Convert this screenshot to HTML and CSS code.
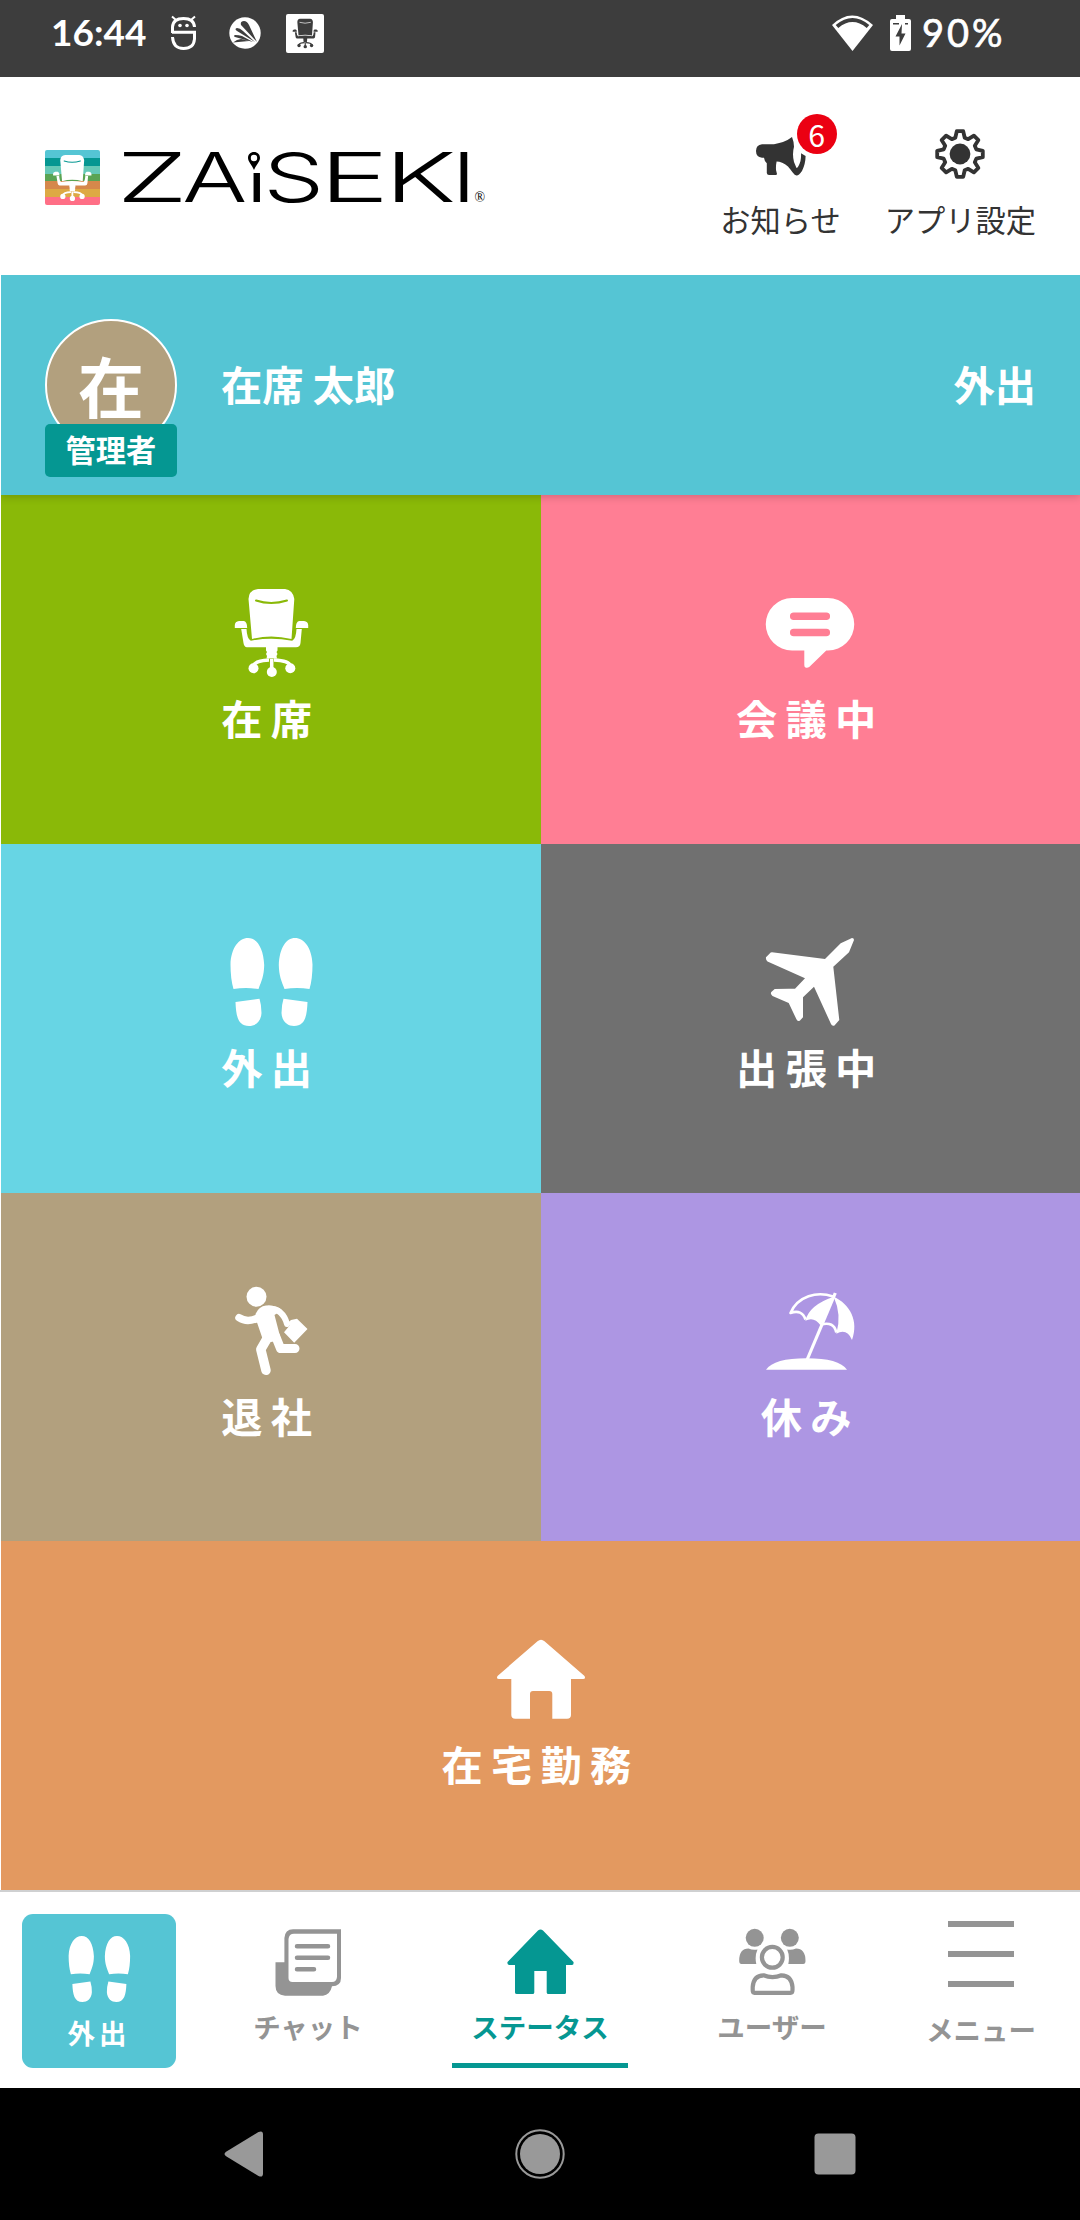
FILE: index.html
```html
<!DOCTYPE html>
<html lang="ja">
<head>
<meta charset="utf-8">
<title>ZAiSEKI</title>
<link rel="stylesheet" href="styles.css">
</head>
<body>
<svg class="defs" aria-hidden="true">
  <symbol id="chair" viewBox="0 0 88 88">
    <path fill="currentColor" d="M31 0H58Q66 1 67.300 10L64.500 50Q44 45 25 50L21.500 10Q22 1 31 0Z"/>
    <path fill="none" stroke="var(--cut)" stroke-width="2" stroke-linecap="round" d="M29 11.500Q44 16.500 60 11.500"/>
    <path fill="currentColor" d="M12 32H17Q20.200 33 20.200 39H7.800V36Q8 32.500 12 32ZM77 32H72Q68.800 33 68.800 39H81.200V36Q81 32.500 77 32ZM14.200 40H19.500Q20 50 23.800 51.700Q44 48 65.200 51.700Q69 50 69.500 40H74.800L73.500 54Q73 58.300 69 58.300H50.500V61.500L49.500 63L50.500 65L49.500 67L50 69.500H39.500L40 67L39 65L40 63L39 61.500V58.300H20Q17 58 16.500 54Z"/>
    <path fill="none" stroke="currentColor" stroke-width="3.500" d="M42 71Q28 71.500 26.500 77M47 71Q62 71.500 63.500 77M44.700 70V82"/>
    <g fill="currentColor"><circle cx="26.500" cy="79.300" r="5"/><circle cx="44.800" cy="83" r="5"/><circle cx="63.300" cy="79.300" r="5"/></g>
  </symbol>
  <symbol id="feet" viewBox="0 0 88 88">
    <g fill="currentColor">
      <path id="foot" d="M6.500 51Q3.500 41 3.500 26.500C4 10 12 0 21 0S36.500 10 37.200 27C37 38 34.500 43 31.500 51Q19 49 6.500 51ZM8.500 64L32.500 60.700Q34.500 67 34.500 75C34 84 28 88 22 88C11 88 9 78 8.500 64Z"/>
      <use href="#foot" transform="translate(89 0) scale(-1 1)"/>
    </g>
  </symbol>
</svg>

<header class="status">
  <div class="status-side">
    <span class="clock">16:44</span>
    <svg class="face" viewBox="0 0 25 36" fill="none" stroke="#fff" stroke-width="3">
      <path d="M1.500 18V12C2 6 6 3.500 12.500 3.500S23 6 23.500 12M1 17.300H23.500V24C23 30 19 33.500 12.500 33.500S2 30 1.500 22"/>
      <path stroke-width="2" d="M1 1.500L5 5M24 1.500L20 5"/>
      <g fill="#fff" stroke="none"><circle cx="9" cy="10.500" r="1.800"/><circle cx="16" cy="10.500" r="1.800"/></g>
    </svg>
    <svg class="fan" viewBox="0 0 32 32">
      <circle cx="16" cy="16" r="15.700" fill="#fff"/>
      <path fill="#3d3d3d" d="M28 25L12 8Q11 4 15 4Q18 4 20 8ZM26 25L8 14Q5 12 8 11Q11 11 14 14ZM24 25L6 20Q4 19 6 18Q10 18 13 19ZM20 24L4 25.500Q8 22 12 22Z"/>
    </svg>
    <span class="app-chip"><svg viewBox="0 0 88 88"><use href="#chair"/></svg></span>
  </div>
  <div class="status-side">
    <svg class="wifi" viewBox="0 0 41 36"><path fill="#fff" d="M20.500 36L0 10Q20-9 41 10Z"/><path fill="none" stroke="#3d3d3d" stroke-width="4" d="M5 11.500Q20.500-1.500 36 11.500"/></svg>
    <svg class="battery" viewBox="0 0 21 36"><path fill="#fff" d="M6 0H15V4H19Q21 4 21 6V34Q21 36 19 36H2Q0 36 0 34V6Q0 4 2 4H6Z"/><path fill="#3d3d3d" d="M12 9L5.500 21.500H9.500V30.500L15.500 18.500H11.500ZM3 8H9V9.500H3ZM15 8H18V9.500H15Z"/></svg>
    <span class="percent">90%</span>
  </div>
</header>

<div class="topbar">
  <div class="brand">
    <span class="brand-mark"><svg viewBox="0 0 88 88"><use href="#chair"/></svg></span>
    <svg class="wordmark" viewBox="0 0 366 60">
      <text class="wordmark-text" transform="scale(1.4 1)" y="54"><tspan x="-4.600" textLength="51" lengthAdjust="spacingAndGlyphs">Z</tspan><tspan x="42.300">A</tspan><tspan x="87.500">i</tspan><tspan x="100.200">S</tspan><tspan x="140.100" textLength="50" lengthAdjust="spacingAndGlyphs">E</tspan><tspan x="186.900" textLength="51" lengthAdjust="spacingAndGlyphs">K</tspan><tspan x="234.500">I</tspan></text>
      <path fill="#fff" d="M122 0H140V25H122Z"/>
      <path fill-rule="evenodd" d="M131 4C127.500 4 125 6.500 125 10C125 13.500 129 17 131 22C133 17 137 13.500 137 10C137 6.500 134.500 4 131 4ZM131 6.800A3.200 3.200 0 0 1 131 13.200A3.200 3.200 0 0 1 131 6.800Z"/>
      <text class="reg" x="351.500" y="53.500">®</text>
    </svg>
  </div>
  <div class="actions">
    <div class="action">
      <span class="action-icon">
        <svg class="horn" viewBox="0 0 50 39"><path fill="#333" d="M6 7.300L18 7.200Q29 5.500 36 0Q38 5 38 9.700Q36 17 38 25L40.500 31Q42.500 30.500 44.500 24Q45.300 20 45 16.300L49.600 19Q49.500 27 46 34Q42 39.500 40 38.300C38 38 36 34 32 29.500Q26 24.500 20.600 24.500Q19.800 28 20 33L21 37Q21 38 19.500 38H13Q11 38 10.800 36V26.300Q8.500 24.500 8 20.700H6Q0 20 0 14Q0 8 6 7.300Z"/></svg>
        <span class="count">6</span>
      </span>
      <span class="action-label">お知らせ</span>
    </div>
    <div class="action">
      <span class="action-icon">
        <svg class="gear" viewBox="-25 -25 50 50"><circle r="10.400" fill="#333"/><path fill="none" stroke="#333" stroke-width="3.800" stroke-linejoin="round" d="M-4.700-16.300L-3.200-22.800H3.200L4.700-16.300L8.200-14.800L13.900-18.400L18.400-13.900L14.800-8.200L16.300-4.700L22.800-3.200V3.200L16.300 4.700L14.800 8.200L18.400 13.900L13.900 18.400L8.200 14.800L4.700 16.300L3.200 22.800H-3.200L-4.700 16.300L-8.200 14.800L-13.900 18.400L-18.400 13.900L-14.800 8.200L-16.300 4.700L-22.800 3.200V-3.200L-16.300-4.700L-14.800-8.200L-18.400-13.900L-13.900-18.400L-8.200-14.800Z"/></svg>
      </span>
      <span class="action-label">アプリ設定</span>
    </div>
  </div>
</div>

<section class="user">
  <div class="avatar"><span class="avatar-face">在</span><span class="role">管理者</span></div>
  <span class="user-name">在席 太郎</span>
  <span class="user-state">外出</span>
</section>

<main class="tiles">
  <div class="tile green"><svg viewBox="0 0 88 88"><use href="#chair"/></svg><span>在席</span></div>
  <div class="tile pink">
    <svg viewBox="0 0 88 88"><path fill="#fff" d="M26 9H62A26.200 26.200 0 0 1 62 61.500H60.300L43.500 77.700Q41.300 79.500 39.500 78.500Q38.300 78 38.300 76V61.500H26A26.200 26.200 0 0 1 26 9Z"/><path stroke="#ff7e94" stroke-width="7.500" stroke-linecap="round" d="M27.700 27.300H60.300M27.700 43.400H60.300"/></svg>
    <span>会議中</span>
  </div>
  <div class="tile sky"><svg viewBox="0 0 88 88"><use href="#feet"/></svg><span>外出</span></div>
  <div class="tile gray">
    <svg viewBox="0 0 88 88"><path fill="#fff" d="M59 21L74.700 5.300L86 0Q88 0 88 2L83 14.300L67.300 28.700L73.300 82L68.500 87.500Q66 88.500 65 86L48 48.700L37 59.300V79.300L34 82.500Q31.500 84 30.300 81L22.700 65L6.500 58Q4 56 5.300 54L8.700 51Q18 50.500 29 50.700L39 40.300L1.500 23.500Q-.5 22 0 19.300L4.700 14.600L6 14.300Z"/></svg>
    <span>出張中</span>
  </div>
  <div class="tile tan">
    <svg viewBox="0 0 88 88" fill="none" stroke="#fff" stroke-linecap="round" stroke-linejoin="round">
      <circle cx="29.500" cy="9.700" r="10" fill="#fff" stroke="none"/>
      <path fill="#fff" stroke="none" d="M28.500 27Q32 19 39 18.500Q50 18 55 23L47.500 28L54 53L44 55L36 53L29.500 34Z"/>
      <path stroke-width="7.500" d="M12 30.700Q20 36 31 31"/>
      <path stroke-width="6" d="M42 21.500Q56 22 60 37"/>
      <path stroke-width="9.500" d="M41 50L33.800 62.300L39 83.300"/>
      <path stroke-width="9" d="M48.500 49L53.500 61.500H68"/>
      <path fill="#fff" stroke="none" d="M60.500 36L64 33L70 31.700L80.500 42L67.200 55.700L57 45.300L63 38Z"/>
    </svg>
    <span>退社</span>
  </div>
  <div class="tile purple">
    <svg viewBox="0 0 88 88">
      <path fill="#fff" d="M0 82.700Q8 71.300 40.500 71.300T81 82.700Z"/>
      <path stroke="#fff" stroke-width="3.200" d="M69.300 6L41 73"/>
      <path fill="#fff" d="M67.700 9.700Q43 18 39.300 33.800Q48 29 54.500 38.300ZM67.700 9.700C84 17 93 34 86 53Q81 41 70.300 46.700Q76 28 67.700 9.700Z"/>
      <path fill="none" stroke="#fff" stroke-width="2.600" stroke-linejoin="round" d="M67 9.500C51 4 32 9 24.500 26Q36 22 39.500 32.500M55 37.500Q68 34 70.300 45.500"/>
    </svg>
    <span>休み</span>
  </div>
  <div class="tile orange">
    <svg viewBox="0 0 88 88"><path fill="#fff" d="M40.500 6.200Q44 3.200 47.500 6.200L87.500 41Q89 44 86 44H74V80Q74 83.700 70 83.700H55.300V59Q55.300 56 52.300 56H36Q33 56 33 59V83.700H18.300Q14.300 83.700 14.300 80V44H2Q-1 44 .5 41Z"/></svg>
    <span>在宅勤務</span>
  </div>
</main>

<nav class="tabs">
  <div class="tab current"><svg viewBox="0 0 88 88"><use href="#feet"/></svg><span>外出</span></div>
  <div class="tab">
    <svg viewBox="0 0 67 67"><path fill="#949494" d="M.5 33.300H9.400V9Q10 .4 18 .3H66V49Q66 57 57 57.300Q55 66 48 66.700H10Q.5 66 .5 57Z"/><path fill="#fff" d="M19 4.700H62V48Q61.500 53 57 53H17.500Q13.500 53 13.500 49V10Q14 4.700 19 4.700Z"/><path stroke="#949494" stroke-width="4.500" stroke-linecap="round" d="M22 17.300H53M22 28.700H53M22 40.300H39"/></svg>
    <span>チャット</span>
  </div>
  <div class="tab active">
    <svg viewBox="0 0 67 67"><path fill="#059792" d="M31 1.500Q33.500-.5 36 1.500L66.500 33Q67 36 65 36H59V63.500Q59 65 57.500 65H41.500Q39.700 65 39.700 63.500V42H27.300V63.500Q27.300 65 25.500 65H10Q8 65 8 63.500V36H2Q0 35.500 .5 33Z"/></svg>
    <span>ステータス</span>
  </div>
  <div class="tab">
    <svg viewBox="0 0 67 67"><g fill="#949494"><circle cx="15.700" cy="8.800" r="9"/><circle cx="50.800" cy="8.800" r="9"/><path d="M2.500 35Q.2 35 .2 32Q0 19.500 9.500 19.500Q14 21.500 18.500 20.500Q15.500 27 17.300 35ZM64.200 35Q66.500 35 66.500 32Q66.500 19.500 57 19.500Q52.500 21.500 48.200 20.500Q51 27 49.300 35Z"/></g><g fill="none" stroke="#949494" stroke-width="4.200"><circle cx="33.300" cy="28.300" r="10.400"/><path d="M15.500 63.800Q13.700 63.800 13.700 61V58Q14.500 46.500 24.500 46.300Q33.500 50 42.500 46.300Q52.500 46.500 53.500 58V61Q53.500 63.800 51.500 63.800Z"/></g></svg>
    <span>ユーザー</span>
  </div>
  <div class="tab menu">
    <svg viewBox="0 0 66 66"><path stroke="#949494" stroke-width="6" d="M0 3H66M0 33H66M0 63H66"/></svg>
    <span>メニュー</span>
  </div>
</nav>

<footer class="system">
  <svg viewBox="0 0 50 50"><path fill="#999" d="M6.500 22.500L38.500 3Q43 1 43 5.500V44.500Q43 49 38.500 47L6.500 27.500Q2.500 25 6.500 22.500Z"/></svg>
  <svg viewBox="0 0 50 50"><circle cx="25" cy="25" r="23.700" fill="none" stroke="#999" stroke-width="2"/><circle cx="25" cy="25" r="20" fill="#999"/></svg>
  <svg viewBox="0 0 50 50"><rect x="4.500" y="4.500" width="41" height="41" rx="4" fill="#999"/></svg>
</footer>
</body>
</html>
```
FILE: styles.css
```css
* { box-sizing: border-box; }
body {
  margin: 0;
  width: 1080px;
  height: 2220px;
  display: flex;
  flex-direction: column;
  overflow: hidden;
  background: #fff;
  color: #333;
  font-family: "Noto Sans CJK JP", sans-serif;
}
svg { display: block; flex: none; overflow: visible; }
.defs { width: 0; height: 0; position: absolute; }

.status {
  height: 77px;
  flex: none;
  padding: 0 77px 11px 51px;
  display: flex;
  justify-content: space-between;
  align-items: center;
  background: #3d3d3d;
  color: #fff;
  font-family: Lato, sans-serif;
  font-size: 37px;
  line-height: 44px;
}
.status-side { display: flex; align-items: center; }
.clock { width: 120px; padding-bottom: 2px; font-weight: 700; white-space: nowrap; }
.face { width: 25px; height: 36px; }
.fan { width: 32px; height: 32px; margin-left: 33px; }
.app-chip {
  width: 38px;
  height: 39px;
  margin-left: 25px;
  padding: 4px;
  border-radius: 2px;
  background: #fff;
  color: #3d3d3d;
  --cut: #fff;
}
.app-chip svg { width: 30px; height: 31px; }
.wifi { width: 41px; height: 36px; }
.battery { width: 21px; height: 36px; margin: 0 11px 0 17px; }
.percent {
  width: 81px;
  padding-bottom: 2px;
  font-size: 38px;
  letter-spacing: 3px;
  -webkit-text-stroke: .7px #fff;
  white-space: nowrap;
}

.topbar {
  height: 198px;
  flex: none;
  padding: 0 44px 0 45px;
  display: flex;
  justify-content: space-between;
}
.brand { display: flex; align-items: center; padding-top: 3px; }
.brand-mark {
  width: 55px;
  height: 55px;
  padding: 5px 4px;
  border-radius: 2px;
  color: #fff;
  --cut: #059792;
  background: linear-gradient(#55c5d4 0 14.3%, #059792 0 28.6%, #65c9b7 0 42.9%, #5aa453 0 57.1%, #d5884b 0 71.4%, #dda944 0 85.7%, #ff6f86 0);
}
.brand-mark svg { width: 46px; height: 46px; }
.wordmark { width: 366px; height: 60px; margin-left: 23px; }
.wordmark-text { font: 300 69px Inter, sans-serif; fill: #000; }
.reg { font: 14px "Liberation Serif", serif; fill: #000; }
.actions { display: flex; gap: 44px; padding-top: 50px; }
.action { display: flex; flex-direction: column; align-items: center; }
.action-icon { position: relative; width: 50px; height: 71px; }
.horn { width: 50px; height: 39px; margin-top: 10px; }
.gear { width: 50px; height: 50px; margin-top: 2px; }
.count {
  position: absolute;
  left: 41px;
  top: -13px;
  width: 40px;
  height: 40px;
  border-radius: 50%;
  background: #eb0012;
  color: #fff;
  font-size: 30.25px;
  line-height: 40px;
  text-align: center;
}
.action-label { font-size: 30.25px; line-height: 42px; }

.user {
  position: relative;
  height: 220px;
  flex: none;
  margin-left: 1px;
  padding: 0 44px;
  display: flex;
  align-items: center;
  background: #55c5d4;
  box-shadow: 0 2px 8px rgba(0, 0, 0, .18);
  clip-path: inset(0 0 -10px 0);
  color: #fff;
  font-weight: 700;
  font-size: 41.25px;
}
.avatar { position: relative; width: 132px; height: 132px; }
.avatar-face {
  display: block;
  height: 132px;
  border: 2px solid #fff;
  border-radius: 50%;
  background: #b2a07e;
  font-size: 66px;
  line-height: 127px;
  text-align: center;
}
.role {
  position: absolute;
  left: 0;
  top: 105px;
  width: 132px;
  height: 53px;
  border-radius: 5px;
  background: #059792;
  font-size: 30.25px;
  line-height: 50px;
  text-align: center;
}
.user-name { margin-left: 44px; padding-bottom: 4px; }
.user-state { margin-left: auto; padding-bottom: 4px; }

.tiles {
  flex: none;
  height: 1395px;
  margin-left: 1px;
  display: grid;
  grid-template-columns: 1fr 1fr;
  grid-template-rows: repeat(4, 1fr);
}
.tile {
  display: flex;
  flex-direction: column;
  align-items: center;
  gap: 10px;
  padding-top: 94px;
  color: #fff;
  font-weight: 700;
  font-size: 41.25px;
  line-height: 60px;
  letter-spacing: 8.25px;
}
.tile svg { width: 88px; height: 88px; }
.green { background: #8ab908; --cut: #8ab908; }
.pink { background: #ff7e94; }
.sky { background: #67d5e4; }
.gray { background: #707070; }
.tan { background: #b2a07e; }
.purple { background: #ad96e3; }
.orange { background: #e39960; grid-column: span 2; }

.tabs {
  flex: none;
  height: 198px;
  padding: 22px 22px 20px;
  border-top: 2px solid #cfd0d1;
  display: grid;
  grid-template-columns: 170px 232px 232px 232px 170px;
}
.tab {
  width: 176px;
  height: 154px;
  justify-self: center;
  padding-top: 15px;
  display: flex;
  flex-direction: column;
  align-items: center;
  gap: 10px;
  color: #949494;
  font-weight: 700;
  font-size: 27.5px;
  line-height: 40px;
  white-space: nowrap;
}
.tab svg { width: 67px; height: 67px; }
.current {
  width: 154px;
  justify-self: start;
  padding-top: 22px;
  border-radius: 11px;
  background: #55c5d4;
  color: #fff;
  letter-spacing: 4.1px;
}
.current svg { width: 66px; height: 66px; }
.active { color: #059792; border-bottom: 5px solid #059792; }
.menu { width: 154px; justify-self: end; padding-top: 7px; gap: 22px; }
.menu svg { width: 66px; height: 66px; }

.system {
  height: 132px;
  flex: none;
  padding: 0 220px;
  display: flex;
  justify-content: space-between;
  align-items: center;
  background: #000;
}
.system svg { width: 50px; height: 50px; }
```
